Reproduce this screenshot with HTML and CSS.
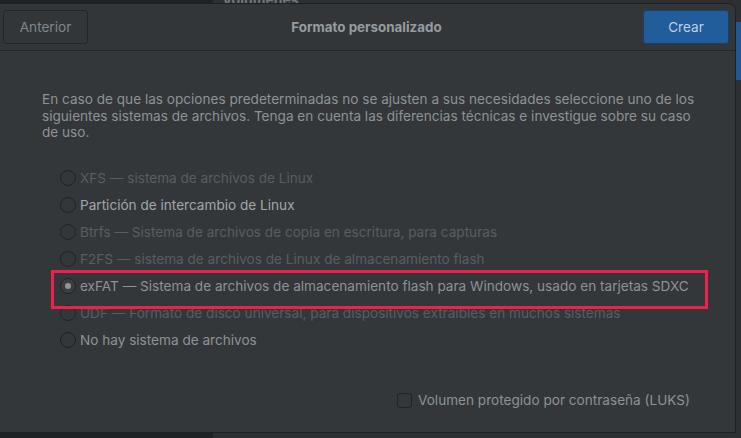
FILE: index.html
```html
<!DOCTYPE html>
<html lang="es">
<head>
<meta charset="utf-8">
<link rel="stylesheet" href="styles.css">
</head>
<body>
<div class="desktop">
  <div class="bg-side"></div>
  <div class="bg-title">Volúmenes</div>
  <div class="bg-selected"></div>

  <div class="dialog">
    <header class="header">
      <button class="btn btn-back">Anterior</button>
      <div class="title">Formato personalizado</div>
      <button class="btn btn-primary">Crear</button>
    </header>
    <main class="content">
      <p class="intro">En caso de que las opciones predeterminadas no se ajusten a sus necesidades seleccione uno de los siguientes sistemas de archivos. Tenga en cuenta las diferencias técnicas e investigue sobre su caso de uso.</p>
      <ul class="options">
        <li class="option disabled"><span class="radio"></span>XFS — sistema de archivos de Linux</li>
        <li class="option bright"><span class="radio"></span>Partición de intercambio de Linux</li>
        <li class="option disabled"><span class="radio"></span>Btrfs — Sistema de archivos de copia en escritura, para capturas</li>
        <li class="option disabled"><span class="radio"></span>F2FS — sistema de archivos de Linux de almacenamiento flash</li>
        <li class="option checked"><span class="radio"></span>exFAT — Sistema de archivos de almacenamiento flash para Windows, usado en tarjetas SDXC</li>
        <li class="option disabled"><span class="radio"></span>UDF — Formato de disco universal, para dispositivos extraíbles en muchos sistemas</li>
        <li class="option"><span class="radio"></span>No hay sistema de archivos</li>
      </ul>
      <div class="footer">
        <label class="check"><span class="box"></span>Volumen protegido por contraseña (LUKS)</label>
      </div>
      <div class="highlight"></div>
    </main>
  </div>
</div>
</body>
</html>
```
FILE: styles.css
```css
* { box-sizing: border-box; }
html, body { margin: 0; padding: 0; }
body {
  width: 741px;
  height: 438px;
  overflow: hidden;
  background: #2c3033;
  font-family: Inter, "Noto Sans", sans-serif;
  font-size: 13.6px;
  color: #8c9396;
}
.desktop { position: relative; width: 741px; height: 438px; }
.bg-side {
  position: absolute; left: 0; top: 0; width: 213px; height: 438px;
  background: #1f2325;
}
.bg-title {
  position: absolute; left: 222px; top: -9px;
  font-size: 14px; font-weight: 700; color: #6f777b;
}
.bg-selected {
  position: absolute; left: 736px; top: 22px; width: 5px; height: 58px;
  background: #1f5895;
}
.dialog {
  position: absolute; left: -1px; top: 3px; width: 737px; height: 430px;
  background: #33373a;
  border: 1px solid #1e2123;
  border-radius: 0 7px 0 0;
  display: flex; flex-direction: column;
}
.header {
  height: 47px;
  flex: none;
  display: flex; align-items: center; justify-content: space-between;
  padding: 0 6px 0 3px;
  border-bottom: 1px solid #222628;
  background: #323639;
  border-radius: 0 7px 0 0;
}
.btn {
  height: 34px;
  font-family: inherit; font-size: 13.6px;
  border-radius: 3px;
  padding: 0;
}
.btn-back {
  width: 85px;
  background: #323639;
  border: 1px solid #222628;
  color: #7f878b;
}
.btn-primary {
  width: 86px;
  background: #215c9b;
  border: 1px solid #173f6a;
  color: #bcd0e6;
}
.title {
  font-weight: 700;
  font-size: 13.4px;
  color: #959ca0;
  margin-left: 2px;
}
.content {
  flex: 1;
  position: relative;
  padding: 40px 45px 0 42px;
  display: flex; flex-direction: column;
}
.intro {
  margin: 0;
  width: 665px;
  line-height: 16.6px;
}
.options {
  list-style: none;
  margin: 24px 0 0 18px;
  padding: 0;
}
.option {
  height: 27px;
  display: flex; align-items: center;
  gap: 4px;
  color: #8c9396;
}
.option.disabled { color: #585e62; }
.option.bright { color: #a1a7aa; }
.radio {
  width: 16px; height: 16px;
  border-radius: 50%;
  border: 1px solid #202426;
  background: #33373a;
  display: flex; align-items: center; justify-content: center;
  flex: none;
}
.option.checked .radio::after {
  content: "";
  width: 6px; height: 6px;
  border-radius: 50%;
  background: #8f9699;
}
.option.checked .radio { background: #3a3e41; }
.footer {
  margin-top: auto;
  margin-bottom: 24px;
  display: flex; justify-content: flex-end;
}
.check {
  display: flex; align-items: center; gap: 6px;
  color: #8c9396;
}
.box {
  width: 15px; height: 15px;
  border: 1px solid #202426;
  border-radius: 3px;
  background: #33373a;
}
.highlight {
  position: absolute;
  left: 51px; top: 219px;
  width: 657px; height: 39px;
  border: 3px solid #f01f4b;
}
```
